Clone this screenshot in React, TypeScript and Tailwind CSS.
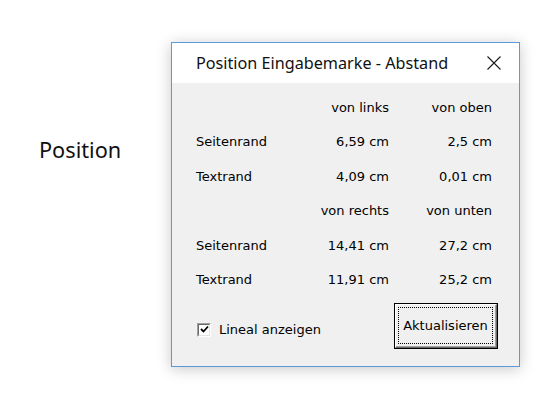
import React from 'react'

const rows = [
  { kind: 'head', a: 'von links', b: 'von oben' },
  { kind: 'row', label: 'Seitenrand', a: '6,59 cm', b: '2,5 cm' },
  { kind: 'row', label: 'Textrand', a: '4,09 cm', b: '0,01 cm' },
  { kind: 'head', a: 'von rechts', b: 'von unten' },
  { kind: 'row', label: 'Seitenrand', a: '14,41 cm', b: '27,2 cm' },
  { kind: 'row', label: 'Textrand', a: '11,91 cm', b: '25,2 cm' },
]

const tahoma = { fontFamily: '"DejaVu Sans", Verdana, sans-serif' }

function CloseIcon() {
  return (
    <svg width="16" height="16" viewBox="0 0 16 16" className="block">
      <path d="M1.5 1.5 L14.5 14.5 M14.5 1.5 L1.5 14.5" stroke="#1a1a1a" strokeWidth="1.1" fill="none" />
    </svg>
  )
}

function Checkbox() {
  // klassische 3D-Checkbox
  return (
    <div className="w-[14px] h-[14px] border-t border-l border-[#a0a0a0] border-b border-r border-b-white border-r-white">
      <div className="w-full h-full border-t border-l border-[#696969] border-b border-r border-b-[#e3e3e3] border-r-[#e3e3e3] bg-white flex items-center justify-center">
        <svg width="9" height="9" viewBox="0 0 9 9">
          <path d="M1 4 L3.5 6.5 L8 1.5" stroke="#000" strokeWidth="1.8" fill="none" />
        </svg>
      </div>
    </div>
  )
}

export default function App() {
  return (
    <div className="w-[560px] h-[400px] bg-white flex">
      <div className="w-[171px] shrink-0 pl-[39px] pt-[134px]">
        <span className="text-[21.7px] text-[#111]" style={{ fontFamily: '"Noto Sans", "Open Sans", sans-serif' }}>
          Position
        </span>
      </div>

      {/* Dialogfenster */}
      <div className="mt-[42px] w-[349px] h-[325px] border border-[#5a9ad8] bg-[#f0f0f0] flex flex-col shadow-[0_2px_14px_rgba(0,0,0,0.22)]">
        <div className="h-[40px] bg-white flex items-center pl-[24px] pr-[17px] justify-between">
          <span className="text-[16.2px] text-[#111]" style={{ fontFamily: '"Noto Sans", "Open Sans", sans-serif' }}>
            Position Eingabemarke - Abstand
          </span>
          <CloseIcon />
        </div>

        <div className="flex-1 pl-[24px] pt-[7px] text-[13px] text-black" style={tahoma}>
          <div className="grid grid-cols-[100px_93px_103px]">
            {rows.map((r, i) => (
              <React.Fragment key={i}>
                <div className="h-[34.5px] flex items-center">{r.kind === 'row' ? r.label : ''}</div>
                <div className="h-[34.5px] flex items-center justify-end">{r.a}</div>
                <div className="h-[34.5px] flex items-center justify-end">{r.b}</div>
              </React.Fragment>
            ))}
          </div>

          <div className="flex justify-between items-start mt-[6px] pr-[21px]">
            <div className="flex items-center gap-[8px] mt-[17px] ml-[1px]">
              <Checkbox />
              <span>Lineal anzeigen</span>
            </div>
            <button className="w-[104px] h-[46px] border border-black bg-[#f0f0f0] p-0">
              <div className="w-full h-full border-t border-l border-white border-b border-r border-b-[#696969] border-r-[#696969]">
                <div className="w-full h-full border-b border-r border-b-[#a0a0a0] border-r-[#a0a0a0] p-[2px]">
                  <div className="w-full h-full border border-dotted border-black flex items-center justify-center text-[13px]" style={tahoma}>
                    Aktualisieren
                  </div>
                </div>
              </div>
            </button>
          </div>
        </div>
      </div>
    </div>
  )
}
